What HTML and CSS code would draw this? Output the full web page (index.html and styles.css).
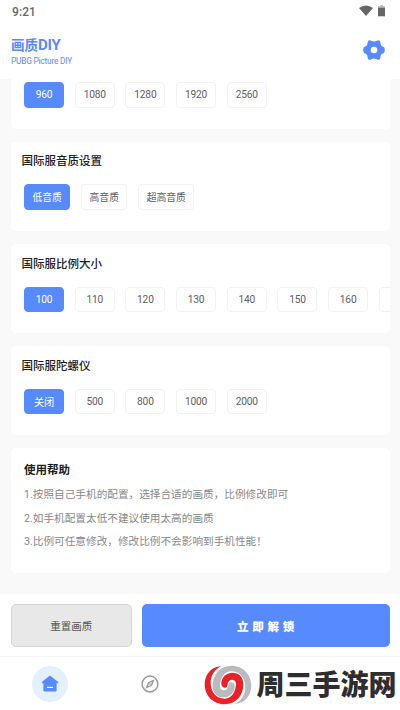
FILE: index.html
```html
<!DOCTYPE html>
<html lang="zh-CN">
<head>
<meta charset="utf-8">
<title>画质DIY</title>
<link rel="stylesheet" href="styles.css">
</head>
<body>
<div class="status">
  <span>9:21</span>
  <svg class="status-icons" width="28" height="12" viewBox="0 0 28 12"><path d="M0 3Q7-2 14 3L7 11Z" fill="#666"/><path d="M21.300 0h2.400v1.200H26V4h-7V1.200h2.300Z" fill="#bbb"/><path d="M19 2.800h7V11.300h-7Z" fill="#666"/></svg>
</div>
<header class="header">
  <div><h1>画质<span>DIY</span></h1><p>PUBG Picture DIY</p></div>
  <svg class="gear" width="22" height="20" viewBox="0 0 22 20"><path fill="#5789ff" fill-rule="evenodd" d="M5.200.8Q6.700-.4 8.200.8Q11 2.200 13.800.8Q15.300-.4 16.800.8Q17.500 2 17.700 4.500Q18.200 6.300 20.800 7Q21.800 7.500 21.800 10Q21.800 12.500 20.800 13Q18.200 13.700 17.700 15.500Q17.500 18 16.800 19.200Q15.300 20.400 13.800 19.200Q11 17.800 8.200 19.200Q6.700 20.400 5.200 19.200Q4.500 18 4.300 15.500Q3.800 13.700 1.200 13Q.2 12.500 .2 10Q.2 7.500 1.200 7Q3.800 6.300 4.300 4.500Q4.500 2 5.200.8ZM11 6.700a3.300 3.300 0 1 0 0 6.600a3.300 3.300 0 1 0 0-6.600Z"/></svg>
</header>
<main class="content">
  <section class="card first">
    <div class="chips"><span class="chip on">960</span><span class="chip">1080</span><span class="chip">1280</span><span class="chip">1920</span><span class="chip">2560</span></div>
  </section>
  <section class="card">
    <h2>国际服音质设置</h2>
    <div class="chips"><span class="chip wide on">低音质</span><span class="chip wide">高音质</span><span class="chip wide">超高音质</span></div>
  </section>
  <section class="card">
    <h2>国际服比例大小</h2>
    <div class="chips"><span class="chip on">100</span><span class="chip">110</span><span class="chip">120</span><span class="chip">130</span><span class="chip">140</span><span class="chip">150</span><span class="chip">160</span><span class="chip"></span></div>
  </section>
  <section class="card">
    <h2>国际服陀螺仪</h2>
    <div class="chips"><span class="chip on">关闭</span><span class="chip">500</span><span class="chip">800</span><span class="chip">1000</span><span class="chip">2000</span></div>
  </section>
  <section class="card help">
    <h3>使用帮助</h3>
    <p>1.按照自己手机的配置，选择合适的画质，比例修改即可</p>
    <p>2.如手机配置太低不建议使用太高的画质</p>
    <p>3.比例可任意修改，修改比例不会影响到手机性能！</p>
  </section>
</main>
<div class="actions"><div class="btn reset">重置画质</div><div class="btn unlock">立即解锁</div></div>
<nav class="nav">
  <div class="home"><svg width="18" height="17" viewBox="0 0 18 17"><path d="M9 .5 17.500 7.200 16.800 8.200H15.600V15.500Q15.600 16.500 14.600 16.500H3.400Q2.400 16.500 2.400 15.500V8.200H1.200L.5 7.200Z" fill="#5789ff"/><path d="M6 12.400h6" stroke="#fff" stroke-width="1.200"/></svg></div>
  <svg class="compass" width="18" height="18" viewBox="0 0 18 18" fill="none" stroke="#999"><circle cx="9" cy="9" r="7.900" stroke-width="1.500"/><path d="M12.300 5.600 10.500 10.300 5.700 12.400 7.500 7.700Z" stroke-width="1.400"/><circle cx="9" cy="9" r=".8" fill="#999" stroke="none"/></svg>
  <div class="brand">
    <svg width="48" height="40" viewBox="11 254 144 120"><defs><path id="swirl" d="M62 258C30 260 13 285 13 312C13 345 38 372 72 372C108 372 129 345 129 312C129 290 115 277 97 277C76 277 62 292 63 312C65 325 79 325 81 316C82 303 88 297 96 298C105 299 108 306 107 315C104 338 93 354 74 355C46 355 31 333 31 308C31 285 44 266 62 258Z"/></defs><use href="#swirl" fill="#b9bcbe" transform="rotate(180 83 314)"/><use href="#swirl" fill="#ec2027"/></svg>
    <span>周三手游网</span>
  </div>
</nav>
</body>
</html>
```
FILE: styles.css
```css
* { box-sizing: border-box; margin: 0; padding: 0; }
body {
  width: 400px; height: 710px; overflow: hidden;
  display: flex; flex-direction: column;
  background: #fff;
  font-family: Roboto, "Noto Sans CJK SC", sans-serif;
}
.status {
  height: 23px; flex: none; padding: 0 13px 0 12px;
  display: flex; justify-content: space-between; align-items: center;
  font-size: 12px; font-weight: 500; letter-spacing: .1px; color: #666;
}
.status-icons { margin-bottom: 2px; }
.header {
  height: 56px; flex: none; padding: 13px 15px 0 11px;
  display: flex; justify-content: space-between; color: #5789ff;
}
.header h1 { font-size: 13.500px; line-height: 19px; font-weight: 700; }
.header h1 span { font-size: 15px; letter-spacing: -.2px; }
.header p { font-size: 8.300px; line-height: 12px; letter-spacing: -.2px; }
.gear { margin-top: 4px; }
.content {
  height: 515px; flex: none; padding: 0 10.500px 0 11px;
  display: flex; flex-direction: column; gap: 13.400px;
  background: #f9f9f9;
}
.card { height: 88.800px; flex: none; padding: 9.500px 0 0 13px; border-radius: 5px; background: #fff; overflow: hidden; }
.card h2 { margin-left: -2.500px; height: 21px; line-height: 21px; font-size: 11.500px; font-weight: 500; color: #222; }
.card.first { height: 49.500px; padding-top: 3px; border-radius: 0 0 5px 5px; }
.chips { display: flex; gap: 10.700px; margin-top: 12px; }
.first .chips { margin-top: 0; }
.chip {
  flex: none; width: 40px; height: 25.500px;
  display: flex; align-items: center; justify-content: center;
  border: 1px solid #f2f2f3; border-radius: 4px;
  font-size: 10.200px; letter-spacing: -.2px; color: #5d5d66; white-space: nowrap;
}
.chip.wide { width: auto; padding: 0 7.500px; font-size: 9.800px; letter-spacing: 0; }
.chip.on { background: #5789ff; border-color: #5789ff; color: #fff; }
.card.help { height: 124.500px; padding-top: 12px; }
.help h3 { height: 21px; line-height: 21px; font-size: 11.500px; font-weight: 700; color: #222; }
.help p { margin-top: 2.600px; height: 21px; line-height: 21px; font-size: 10.650px; color: #888; white-space: nowrap; }
.actions {
  height: 63px; flex: none; padding: 10px 10.500px 9px;
  display: flex; gap: 10px; border-bottom: 1px solid #f5f5f5;
}
.btn { height: 43px; border-radius: 5px; display: flex; align-items: center; justify-content: center; }
.reset { width: 121.500px; border: 1px solid #d5d5d5; background: #e8e8e8; color: #555; font-size: 10.500px; }
.unlock { flex: 1; padding-left: 3.500px; background: #5789ff; color: #fff; font-size: 11.500px; font-weight: 900; letter-spacing: 3.700px; }
.nav { height: 53px; flex: none; padding-left: 32px; display: flex; align-items: center; }
.home { width: 36px; height: 36px; border-radius: 50%; background: #e3f1fe; display: flex; align-items: center; justify-content: center; }
.compass { margin-left: 73px; }
.brand { display: flex; align-items: center; margin: 2px 0 0 44.500px; }
.brand span { margin-left: 5px; padding-top: 3px; font-size: 28px; line-height: 40px; font-weight: 900; color: #2e2e30; white-space: nowrap; }
```
